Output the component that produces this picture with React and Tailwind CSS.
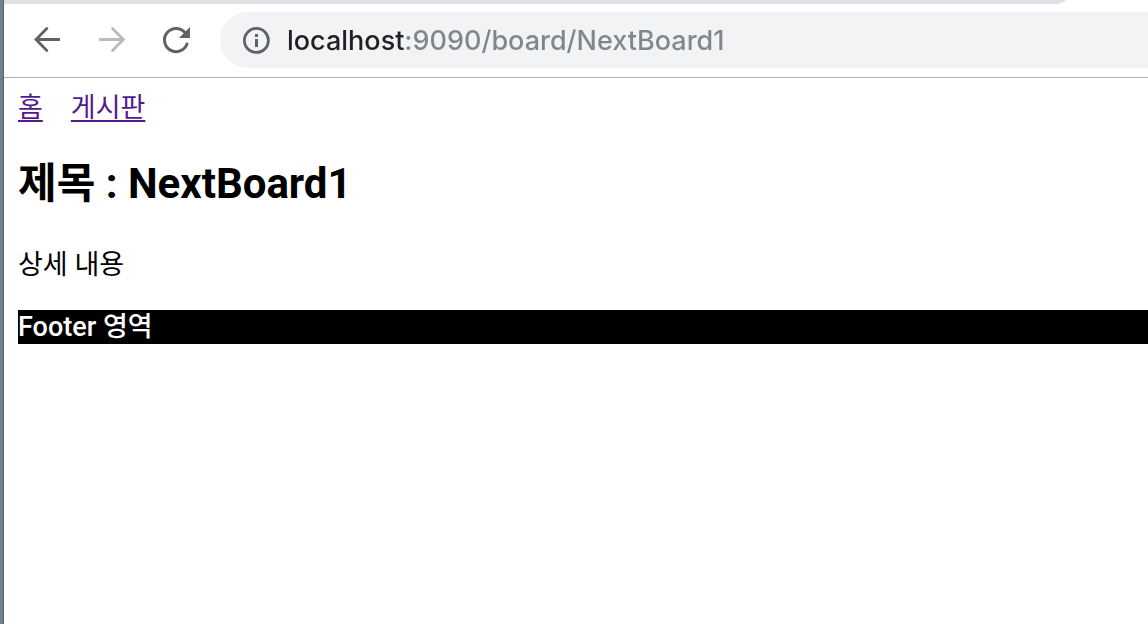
import React from "react";

function BackIcon() {
  return (
    <svg viewBox="0 0 32 32" className="size-8" fill="none" stroke="currentColor" strokeWidth="2.8" strokeLinecap="round" aria-hidden="true">
      <path d="M31.8 15.5H8.5M19 4.5L8.2 15.5L19 26.5" transform="translate(-0.2 0)" />
    </svg>
  );
}

function ForwardIcon() {
  return (
    <svg viewBox="0 0 32 32" className="size-8" fill="none" stroke="currentColor" strokeWidth="2.8" strokeLinecap="round" aria-hidden="true">
      <path d="M4.2 15.5H27M16.5 4.5L27.4 15.5L16.5 26.5" />
    </svg>
  );
}

function ReloadIcon() {
  return (
    <svg viewBox="0 0 32 32" className="size-8" fill="none" aria-hidden="true">
      <path d="M27 20A11.6 11.6 0 1 1 25 8.6" stroke="currentColor" strokeWidth="3" strokeLinecap="round" />
      <path d="M30 3V14H19Z" fill="currentColor" />
    </svg>
  );
}

function InfoIcon() {
  return (
    <svg viewBox="0 0 28 28" className="size-7" fill="none" aria-hidden="true">
      <circle cx="14.4" cy="14.4" r="12" stroke="currentColor" strokeWidth="2.8" />
      <path d="M13 8h3v3h-3zM13 13h3v8h-3z" fill="currentColor" />
    </svg>
  );
}

function Toolbar() {
  return (
    <header className="border-b border-[#b3b3b3]">
      <div className="h-1 overflow-hidden">
        <div className="-mt-4 mr-[76px] h-5 rounded-br-2xl bg-[#dee1e6]" />
      </div>
      <div className="flex items-center pt-2 pb-[9px] pl-6 text-[#5f6368]">
        <button type="button" aria-label="Back" className="mr-9">
          <BackIcon />
        </button>
        <button type="button" aria-label="Forward" className="mr-8 text-[#bababc]" disabled>
          <ForwardIcon />
        </button>
        <button type="button" aria-label="Reload" className="mr-7">
          <ReloadIcon />
        </button>
        <div className="flex h-14 min-w-0 flex-1 items-center gap-[17px] rounded-l-full bg-[#f1f3f4] pl-[22px]">
          <button type="button" aria-label="Site information">
            <InfoIcon />
          </button>
          <input
            type="text"
            aria-label="Address"
            defaultValue="localhost:9090/board/NextBoard1"
            className="min-w-0 flex-1 bg-[linear-gradient(90deg,#202124_117px,#80868b_117px)] bg-clip-text pt-0.5 font-['Inter',sans-serif] text-[27px] leading-10 font-medium text-transparent caret-black outline-none"
          />
        </div>
      </div>
    </header>
  );
}

export default function App() {
  return (
    <div className="flex min-h-screen bg-[#6f8190]">
      <div className="w-1 shrink-0 border-r border-[#53626f] bg-[#6f8190]" />
      <div className="min-w-0 flex-1 bg-white">
        <Toolbar />
        <main className="pt-[13px] pl-[14px] font-['Roboto','Noto_Sans_CJK_KR',sans-serif] text-[27px] leading-[34px] text-black">
          <nav className="flex gap-7 text-[#551a8b]">
            <a href="/" className="underline decoration-2 underline-offset-3">홈</a>
            <a href="/board" className="underline decoration-2 underline-offset-3">게시판</a>
          </nav>
          <h1 className="mt-[31px] text-[42px] leading-[56px] font-bold">제목 : NextBoard1</h1>
          <p className="mt-9">상세 내용</p>
          <footer className="mt-7 bg-black font-medium text-white">Footer 영역</footer>
        </main>
      </div>
    </div>
  );
}
